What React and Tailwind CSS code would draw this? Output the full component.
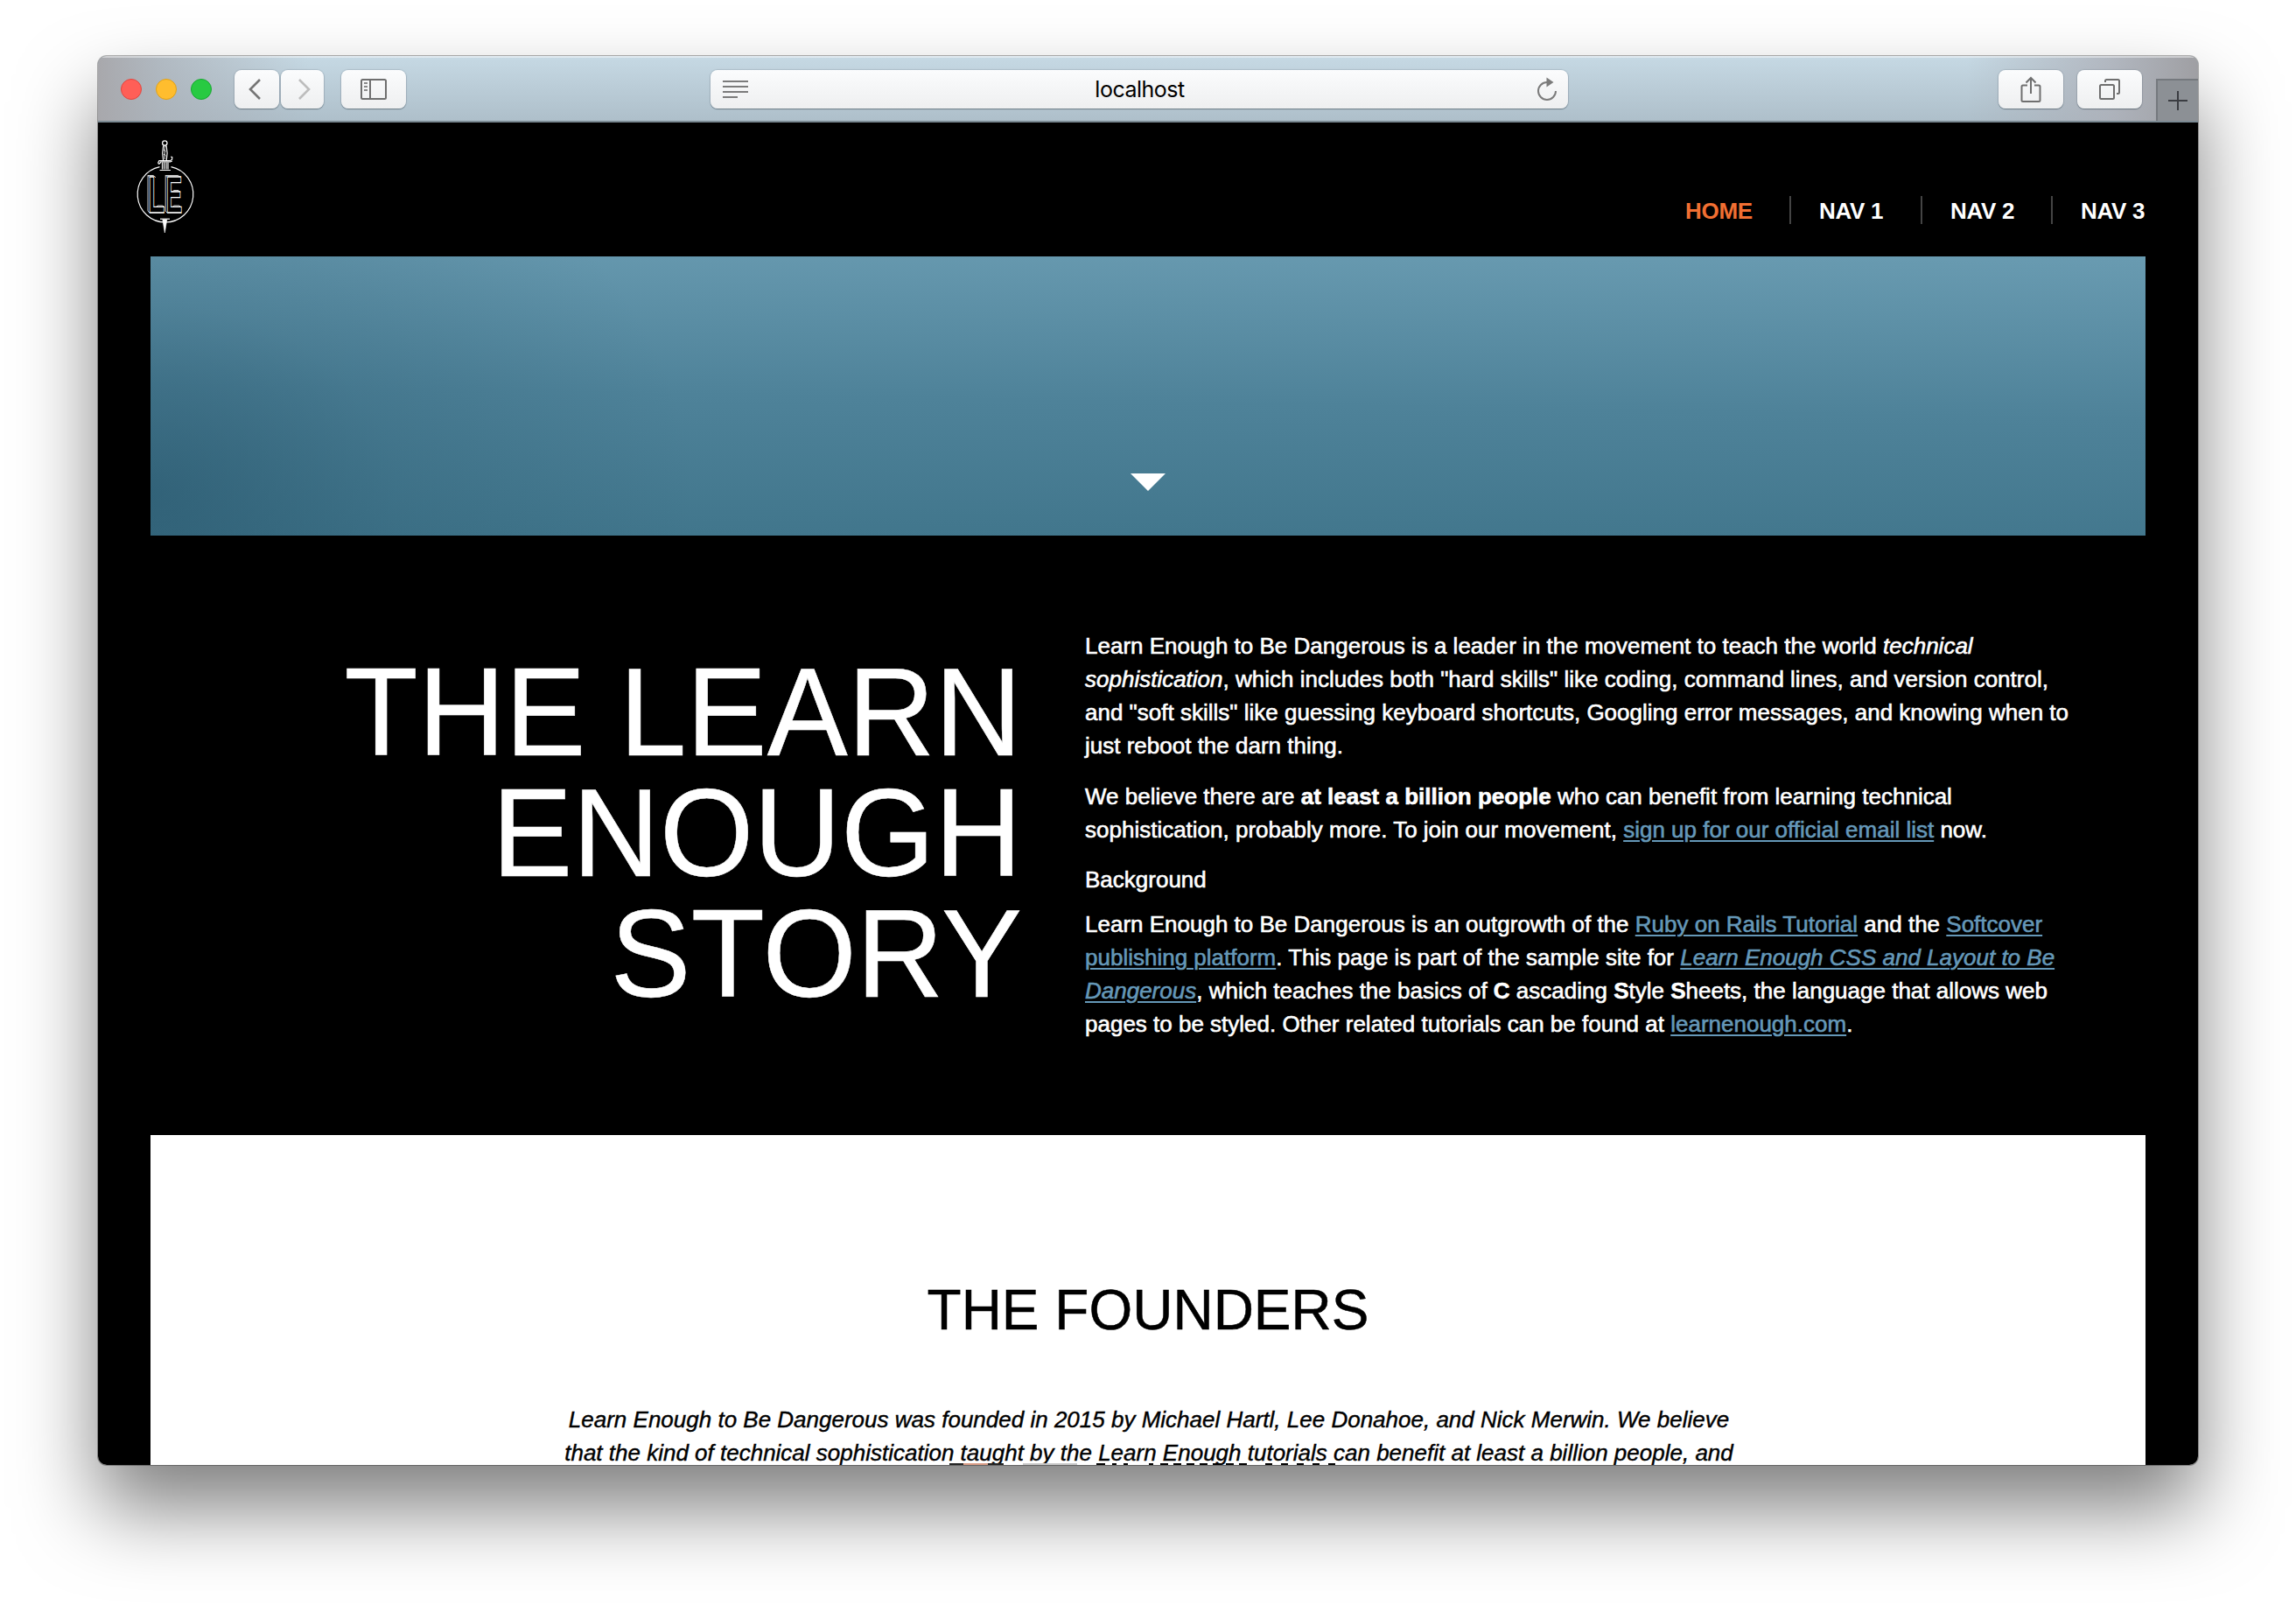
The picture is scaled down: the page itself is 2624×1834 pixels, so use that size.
const toolButton =
  "flex items-center justify-center rounded-[8px] bg-linear-to-b from-[#fbfcfd] to-[#eeeff0] shadow-[0_1px_1px_rgba(60,75,85,0.5),0_0_1px_1px_rgba(90,110,125,0.22)]";

function Logo() {
  return (
    <svg className="block opacity-[0.99]" width="68" height="112" viewBox="155 157 68 112" fill="none" stroke="#fff">
      <g strokeWidth="1.2">
        <path d="M182.500 190.700A32 32 0 0 0 189 254A32 32 0 0 0 195.500 190.700" />
        <circle cx="188.3" cy="163.5" r="2.7" strokeWidth="1.3" />
        <path d="M186.6 167l-.9 8 .9 8.5h3.6l.9-8.500-.9-8z" />
        <path d="M188.200 168v14M187 171l2.500 2M187 176l2.500 2" strokeWidth=".9" />
        <path d="M181.500 187.500l-.8-1.500 1.200-2.300h12.500l2.200-1.500.2-2.500-1.500-.6M181.500 187.500l1.500-1.200.6-1.300h11l2.200-1" />
        <path d="M185.500 185.500v8M187.600 185.500v8M190 185.500v8M192 185.500v8M182.500 194.500h12.500" />
        <path d="M183 250.200h11" />
        <path d="M185.800 251l2.500 15 2.500-15z" fill="#fff" strokeWidth=".6" />
      </g>
      <g fontFamily="Liberation Sans" fontWeight="700" fontSize="59" strokeWidth="1.1">
        <text transform="translate(169 243.400) scale(.54 1)" vectorEffect="non-scaling-stroke">L</text>
        <text transform="translate(189.400 243.400) scale(.48 1)" vectorEffect="non-scaling-stroke">E</text>
      </g>
      <g strokeWidth="1" strokeOpacity=".8">
        <path d="M171.200 202.800l-2.200-2.300v40.500l2.200 2.400M169 200.500h6.200l2.800 2.300M178.500 236.500l1.500-1.500h6l2.200 2" />
        <path d="M191.300 202.800l-2.100-2.300v40.500l2.100 2.400M189.200 200.500h14.500l2.600 2.300M197.500 219l1-1.500h5.500l1.800 2M197.500 236.500l1-1.500h6.500l2 2" />
      </g>
    </svg>
  );
}

function Toolbar() {
  return (
    <div className="flex h-[76px] items-start border-b-2 border-[#7b8a93] bg-[linear-gradient(90deg,#a8a8ac_0%,rgba(170,175,182,0.75)_3%,rgba(180,200,212,0)_10%,rgba(180,200,212,0)_89%,rgba(172,174,182,0.8)_96%,#9f9fa3_100%),linear-gradient(180deg,#c6d9e4_0%,#aebfca_100%)] pt-4 pl-[26px] shadow-[inset_0_2px_0_rgba(255,255,255,0.45)]">
      <div className="mt-[10px] flex gap-4">
        <span className="size-6 rounded-full border border-[#e2463f] bg-[#ff5f57]" />
        <span className="size-6 rounded-full border border-[#e1a116] bg-[#ffbd2e]" />
        <span className="size-6 rounded-full border border-[#17a831] bg-[#28ca42]" />
      </div>
      <div className="ml-[26px] flex gap-[2px]">
        <div className={`${toolButton} h-11 w-[51px] pr-[6px]`}>
          <svg width="16" height="26" viewBox="0 0 16 26" fill="none" stroke="#757575" strokeWidth="2.600"><path d="M14 2L3 13 14 24" /></svg>
        </div>
        <div className={`${toolButton} h-11 w-[49px] pl-1`}>
          <svg width="16" height="26" viewBox="0 0 16 26" fill="none" stroke="#bdbdbd" strokeWidth="2.600"><path d="M2 2l11 11L2 24" /></svg>
        </div>
      </div>
      <div className={`${toolButton} ml-5 h-11 w-[74px]`}>
        <svg width="30" height="24" viewBox="0 0 30 24" fill="none" stroke="#6f6f6f" strokeWidth="2">
          <rect x="1" y="1" width="28" height="22" rx="1.500" />
          <path d="M11 1v22" />
          <path d="M4 5h4M4 9h4M4 13h4" strokeWidth="1.800" stroke="#8a8a8a" />
        </svg>
      </div>
      <div className={`${toolButton} ml-[348px] h-11 w-[980px] pr-[12px] pl-[14px]`}>
        <svg width="29" height="22" viewBox="0 0 29 22" stroke="#7b7b7b" strokeWidth="2"><path d="M0 2h29M0 8h29M0 14h29M0 20h17" /></svg>
        <span className="flex-1 pr-[6px] text-center font-['Inter',sans-serif] text-[25px] leading-[45px] tracking-[-0.500px] text-black">localhost</span>
        <svg width="24" height="28" viewBox="0 0 24 28" fill="none" stroke="#7b7b7b" strokeWidth="2">
          <path d="M12 6A10 10 0 1 0 22 16" />
          <path d="M11.500 .5L19.500 6l-8 5.500z" fill="#7b7b7b" stroke="none" />
        </svg>
      </div>
      <div className={`${toolButton} ml-[492px] h-11 w-[74px]`}>
        <svg width="24" height="32" viewBox="0 0 24 32" fill="none" stroke="#6f6f6f" strokeWidth="2">
          <path d="M8 11.500H3a1.500 1.500 0 0 0-1.500 1.500v15.500A1.500 1.500 0 0 0 3 30h18a1.500 1.500 0 0 0 1.500-1.500V13a1.500 1.500 0 0 0-1.500-1.500h-5" />
          <path d="M12 21V3M6.500 8.500L12 3l5.500 5.500" />
        </svg>
      </div>
      <div className={`${toolButton} ml-4 h-11 w-[74px]`}>
        <svg width="26" height="26" viewBox="0 0 26 26" fill="none" stroke="#6f6f6f" strokeWidth="2">
          <rect x="2" y="8" width="16" height="16" rx="1.500" />
          <path d="M8 5V3.500A1.500 1.500 0 0 1 9.500 2h13A1.500 1.500 0 0 1 24 3.500v13A1.500 1.500 0 0 1 22.500 18H21" />
        </svg>
      </div>
      <div className="mt-[10px] ml-4 flex h-12 w-12 items-center justify-center border-t-2 border-l-2 border-[#75797e] bg-[#8c9095]">
        <svg width="22" height="22" viewBox="0 0 22 22" stroke="#3b3d42" strokeWidth="2"><path d="M11 0v22M0 11h22" /></svg>
      </div>
    </div>
  );
}

function A({ children, className = "" }) {
  return <a className={`text-[#6598b8] underline decoration-2 underline-offset-[3px] ${className}`}>{children}</a>;
}

export default function App() {
  return (
    <div className="h-[1834px] w-[2624px] overflow-hidden bg-white px-28 pt-16 font-['Liberation_Sans',Arial,sans-serif]">
      <div className="h-[1610px] w-[2400px] rounded-[10px] shadow-[0_0_0_1px_rgba(0,0,0,0.3),0_50px_90px_rgba(0,0,0,0.5)]">
        <div className="h-full overflow-hidden rounded-[10px] bg-black">
          <Toolbar />
          <header className="flex h-[153px] justify-between pt-[17px] pr-[60px] pl-[43px]">
            <Logo />
            <nav className="mt-[67px] flex h-8 text-[26px] leading-[35px] font-bold tracking-[-0.300px] whitespace-nowrap text-white">
              <a className="w-[119px] text-[#f26f32]">HOME</a>
              <a className="w-[150px] border-l-2 border-[#444] pl-8">NAV 1</a>
              <a className="w-[149px] border-l-2 border-[#444] pl-8">NAV 2</a>
              <a className="w-[108px] border-l-2 border-[#444] pl-8">NAV 3</a>
            </nav>
          </header>
          <section className="mx-[60px] flex h-[319px] items-end justify-center bg-[radial-gradient(ellipse_620px_480px_at_0%_85%,rgba(35,80,102,0.55),rgba(35,80,102,0.2)_45%,rgba(35,80,102,0)),linear-gradient(181deg,#699bb1_0%,#4e8299_52%,#40758b_100%)] pb-[51px]">
            <svg width="40" height="20" viewBox="0 0 40 20" fill="#fff"><path d="M0 0h40L20 20z" /></svg>
          </section>
          <section className="flex h-[685px] text-white">
            <h1 className="mt-[132px] h-[414px] w-[1056px] origin-top text-right text-[138px] leading-[133px] whitespace-nowrap scale-y-[1.04] [-webkit-text-stroke:0.500px]">
              THE LEARN<br />ENOUGH<br />STORY
            </h1>
            <div className="mt-[107px] ml-[72px] text-[26px] leading-[38px] whitespace-nowrap [-webkit-text-stroke:0.600px]">
              <p>
                Learn Enough to Be Dangerous is a leader in the movement to teach the world <em>technical</em><br />
                <em>sophistication</em>, which includes both "hard skills" like coding, command lines, and version control,<br />
                and "soft skills" like guessing keyboard shortcuts, Googling error messages, and knowing when to<br />
                just reboot the darn thing.
              </p>
              <p className="mt-5">
                We believe there are <strong>at least a billion people</strong> who can benefit from learning technical<br />
                sophistication, probably more. To join our movement, <A>sign up for our official email list</A> now.
              </p>
              <h3 className="mt-[19px]">Background</h3>
              <p className="mt-[13px]">
                Learn Enough to Be Dangerous is an outgrowth of the <A>Ruby on Rails Tutorial</A> and the <A>Softcover</A><br />
                <A>publishing platform</A>. This page is part of the sample site for <A className="italic">Learn Enough CSS and Layout to Be</A><br />
                <A className="italic">Dangerous</A>, which teaches the basics of <strong>C</strong> ascading <strong>S</strong>tyle <strong>S</strong>heets, the language that allows web<br />
                pages to be styled. Other related tutorials can be found at <A>learnenough.com</A>.
              </p>
            </div>
          </section>
          <section className="relative mx-[60px] h-[377px] overflow-hidden bg-white pt-[168px] text-center text-black">
            <h2 className="text-[64px] leading-[64px] [-webkit-text-stroke:0.500px]">THE FOUNDERS</h2>
            <p className="mt-[74px] pl-[2px] text-[26px] leading-[38px] whitespace-nowrap italic [-webkit-text-stroke:0.400px]">
              Learn Enough to Be Dangerous was founded in 2015 by Michael Hartl, Lee Donahoe, and Nick Merwin. We believe<br />
              that the kind of technical sophistication taught by the Learn Enough tutorials can benefit at least a billion people, and
            </p>
            <div className="absolute bottom-0 left-[913px] flex h-[2px]">
              <span className="w-4 bg-[#222]" />
              <span className="w-7 bg-[#d99c86]" />
              <span className="w-[18px] bg-[#222]" />
              <span className="ml-[22px] w-[62px] bg-[#c8c8c8]" />
              <span className="ml-[22px] w-[10px] bg-black" />
              <span className="ml-2 w-[5px] bg-black" />
              <span className="ml-2 w-[5px] bg-black" />
              <span className="ml-6 w-[5px] bg-black" />
              <span className="ml-2 w-[100px] bg-[repeating-linear-gradient(90deg,#000_0_9px,transparent_9px_15px)]" />
              <span className="ml-5 w-[90px] bg-[repeating-linear-gradient(90deg,#000_0_8px,transparent_8px_18px)]" />
            </div>
          </section>
        </div>
      </div>
    </div>
  );
}
